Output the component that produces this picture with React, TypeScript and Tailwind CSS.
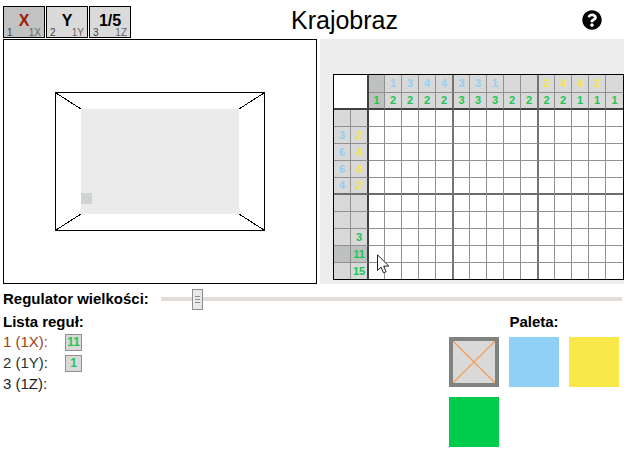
import { useState } from "react";
import { FaQuestionCircle } from "react-icons/fa";

type Clue = { n: number; tone: "blue" | "yellow" | "green" } | null;

const tones = {
  blue: "text-[#90d0f4]",
  yellow: "text-[#f9e445]",
  green: "text-[#1fc455]",
};

const b = (n: number): Clue => ({ n, tone: "blue" });
const y = (n: number): Clue => ({ n, tone: "yellow" });
const g = (n: number): Clue => ({ n, tone: "green" });

const columnClues: Clue[][] = [
  [null, b(1), b(3), b(4), b(4), b(3), b(3), b(1), null, null, y(2), y(4), y(4), y(2), null],
  [1, 2, 2, 2, 2, 3, 3, 3, 2, 2, 2, 2, 1, 1, 1].map(g),
];

const rowClues: Clue[][] = [
  [null, null],
  [b(3), y(2)],
  [b(6), y(4)],
  [b(6), y(4)],
  [b(4), y(2)],
  [null, null],
  [null, null],
  [null, g(3)],
  [null, g(11)],
  [null, g(15)],
];

const activeColumn = 0;
const activeRow = 8;

const axes = [
  { key: "1", label: "X", name: "1X" },
  { key: "2", label: "Y", name: "1Y" },
  { key: "3", label: "1/5", name: "1Z" },
];

const rules = [
  { text: "1 (1X):", clue: "11", color: "text-[#9c4316]" },
  { text: "2 (1Y):", clue: "1", color: "text-[#26332c]" },
  { text: "3 (1Z):", clue: "", color: "text-[#222222]" },
];

const palette = [
  { name: "Niebieski", fill: "bg-[#90d0f5]" },
  { name: "Żółty", fill: "bg-[#f8e84a]" },
  { name: "Zielony", fill: "bg-[#00cc4b]" },
];

function columnEdge(i: number) {
  if (i === 14) return "";
  return i % 5 === 4 ? "border-r-2 border-r-[#747474]" : "border-r border-r-[#919191]";
}

function rowEdge(i: number) {
  if (i === 9) return "";
  return i === 4 ? "border-b-2 border-b-[#6c6e6c]" : "border-b border-b-[#919191]";
}

function columnWidth(i: number) {
  if (i === 4 || i === 9) return "w-[18px]";
  return i % 5 === 0 ? "w-[16px]" : "w-[17px]";
}

function Scene() {
  return (
    <section className="flex flex-1 items-center justify-center border border-black bg-white">
      <svg width="210" height="139" viewBox="0 0 210 139" shapeRendering="crispEdges">
        <rect x="0.5" y="0.5" width="209" height="138" fill="none" stroke="#000" />
        <path d="M1 1 26 17M209 1 184 17M1 138 26 122M209 138 184 122" stroke="#000" fill="none" />
        <rect x="26" y="17" width="158" height="105" fill="#ebebeb" />
        <rect x="26" y="101" width="11" height="11" fill="#cfd3d1" />
      </svg>
    </section>
  );
}

function Pointer() {
  return (
    <svg className="absolute left-[44px] top-[180px]" width="13" height="20" viewBox="0 0 13 20">
      <path d="M.5.8v15.7l3.6-3.4 2.4 5.7 2.6-1.1-2.4-5.6h5.1z" fill="#fff" stroke="#222" />
    </svg>
  );
}

function Board() {
  return (
    <section className="bg-[#ededed] pb-1 pl-[13px] pt-[35px]">
      <div className="relative">
        <table className="w-[291px] table-fixed border-separate border-spacing-0 border border-black bg-white text-center text-[11px] font-bold leading-[15px]">
          <colgroup>
            <col className="w-[17px]" />
            <col className="w-[18px]" />
            {columnClues[0].map((_, i) => (
              <col key={i} className={columnWidth(i)} />
            ))}
          </colgroup>
          <thead>
            {columnClues.map((line, r) => (
              <tr key={r} className={r === 0 ? "h-[18px]" : "h-[17px]"}>
                {r === 0 && (
                  <td colSpan={2} rowSpan={2} className="border-b-2 border-r-2 border-[#404040] p-0" />
                )}
                {line.map((clue, i) => (
                  <th
                    key={i}
                    className={`p-0 ${r === 0 ? "border-b border-b-[#919191]" : "border-b-2 border-b-[#404040]"} ${columnEdge(i)} ${i === activeColumn ? "bg-[#bfc1c0]" : "bg-[#d9d9d9]"} ${clue ? tones[clue.tone] : ""}`}
                  >
                    {clue?.n}
                  </th>
                ))}
              </tr>
            ))}
          </thead>
          <tbody>
            {rowClues.map((line, r) => (
              <tr key={r} className={r === 9 ? "h-[16px]" : "h-[17px]"}>
                {line.map((clue, i) => (
                  <th
                    key={i}
                    className={`p-0 ${rowEdge(r)} ${i === 0 ? "border-r border-r-[#919191]" : "border-r-2 border-r-[#404040]"} ${r === activeRow ? "bg-[#bfc1c0]" : "bg-[#d9d9d9]"} ${clue ? tones[clue.tone] : ""}`}
                  >
                    {clue?.n}
                  </th>
                ))}
                {columnClues[0].map((_, i) => (
                  <td key={i} className={`p-0 ${rowEdge(r)} ${columnEdge(i)}`} />
                ))}
              </tr>
            ))}
          </tbody>
        </table>
        <Pointer />
      </div>
    </section>
  );
}

export default function App() {
  const [axis, setAxis] = useState("1");
  const [size, setSize] = useState(7);

  return (
    <main className="bg-white pl-[3px] pr-1 font-['Liberation_Sans',Arial,sans-serif] text-[15px] text-black">
      <header className="flex h-[39px] items-start pt-1.5">
        <div className="flex gap-px">
          {axes.map((a) => (
            <button
              key={a.key}
              type="button"
              onClick={() => setAxis(a.key)}
              className={`flex h-8 w-[42px] flex-col justify-between border border-black px-[3px] pt-1.5 ${axis === a.key ? "bg-[#c2c2c2]" : "bg-[#dadada]"}`}
            >
              <span
                className={`self-center text-base font-bold leading-4 ${a.key === "1" ? "text-[#9c1a06]" : "text-black"}`}
              >
                {a.label}
              </span>
              <span className="flex w-full justify-between text-[10px] leading-[8px] text-[#444444]">
                <span>{a.key}</span>
                <span className="text-[#666666]">{a.name}</span>
              </span>
            </button>
          ))}
        </div>
        <h1 className="flex-1 pr-6 text-center text-[25px] leading-7">Krajobraz</h1>
        <button type="button" aria-label="Pomoc" className="mr-[22px] mt-1">
          <FaQuestionCircle size={20} />
        </button>
      </header>

      <div className="flex gap-[3px]">
        <Scene />
        <Board />
      </div>

      <div className="flex h-[30px] items-center gap-3 pr-0.5">
        <label htmlFor="size" className="font-bold">
          Regulator wielkości:
        </label>
        <input
          id="size"
          type="range"
          min={0}
          max={100}
          value={size}
          onChange={(e) => setSize(Number(e.target.value))}
          className="h-[21px] min-w-0 flex-1 appearance-none bg-transparent [&::-webkit-slider-runnable-track]:h-1 [&::-webkit-slider-runnable-track]:bg-[#e2ddd9] [&::-webkit-slider-thumb]:-mt-2 [&::-webkit-slider-thumb]:h-[21px] [&::-webkit-slider-thumb]:w-[11px] [&::-webkit-slider-thumb]:appearance-none [&::-webkit-slider-thumb]:border [&::-webkit-slider-thumb]:border-[#8c8f90] [&::-webkit-slider-thumb]:bg-[linear-gradient(90deg,#ececec_2px,transparent_2px,transparent_7px,#e4e4e4_7px),linear-gradient(transparent_6px,#8c8f90_6px,#8c8f90_7px,transparent_7px,transparent_9px,#8c8f90_9px,#8c8f90_10px,transparent_10px,transparent_12px,#8c8f90_12px,#8c8f90_13px,transparent_13px)] [&::-webkit-slider-thumb]:bg-[#e9e9e9]"
        />
      </div>

      <div className="flex items-start justify-between pr-[5px]">
        <section>
          <h2 className="h-[18px] font-bold leading-4">Lista reguł:</h2>
          <ul>
            {rules.map((rule) => (
              <li key={rule.text} className="flex h-[21px] items-center">
                <span className={`w-[62px] ${rule.color}`}>{rule.text}</span>
                {rule.clue && (
                  <span className="h-[17px] w-[17px] border border-[#909090] bg-[#d9d9d9] text-center text-xs font-bold leading-[15px] text-[#1fc455]">
                    {rule.clue}
                  </span>
                )}
              </li>
            ))}
          </ul>
        </section>

        <section>
          <h2 className="h-[23px] text-center font-bold leading-4">Paleta:</h2>
          <div className="grid grid-cols-[repeat(3,50px)] gap-2.5">
            <button type="button" aria-label="Puste" className="h-[50px] border-4 border-[#808280] bg-[#d9d9d9]">
              <svg className="block" width="42" height="42" viewBox="0 0 42 42">
                <path d="M0 0 42 42" stroke="#f2a05c" strokeWidth="1.3" />
                <path d="M42 0 0 42" stroke="#f2a05c" strokeWidth="1.3" />
              </svg>
            </button>
            {palette.map((c) => (
              <button key={c.name} type="button" aria-label={c.name} className={`h-[50px] ${c.fill}`} />
            ))}
          </div>
        </section>
      </div>
    </main>
  );
}
